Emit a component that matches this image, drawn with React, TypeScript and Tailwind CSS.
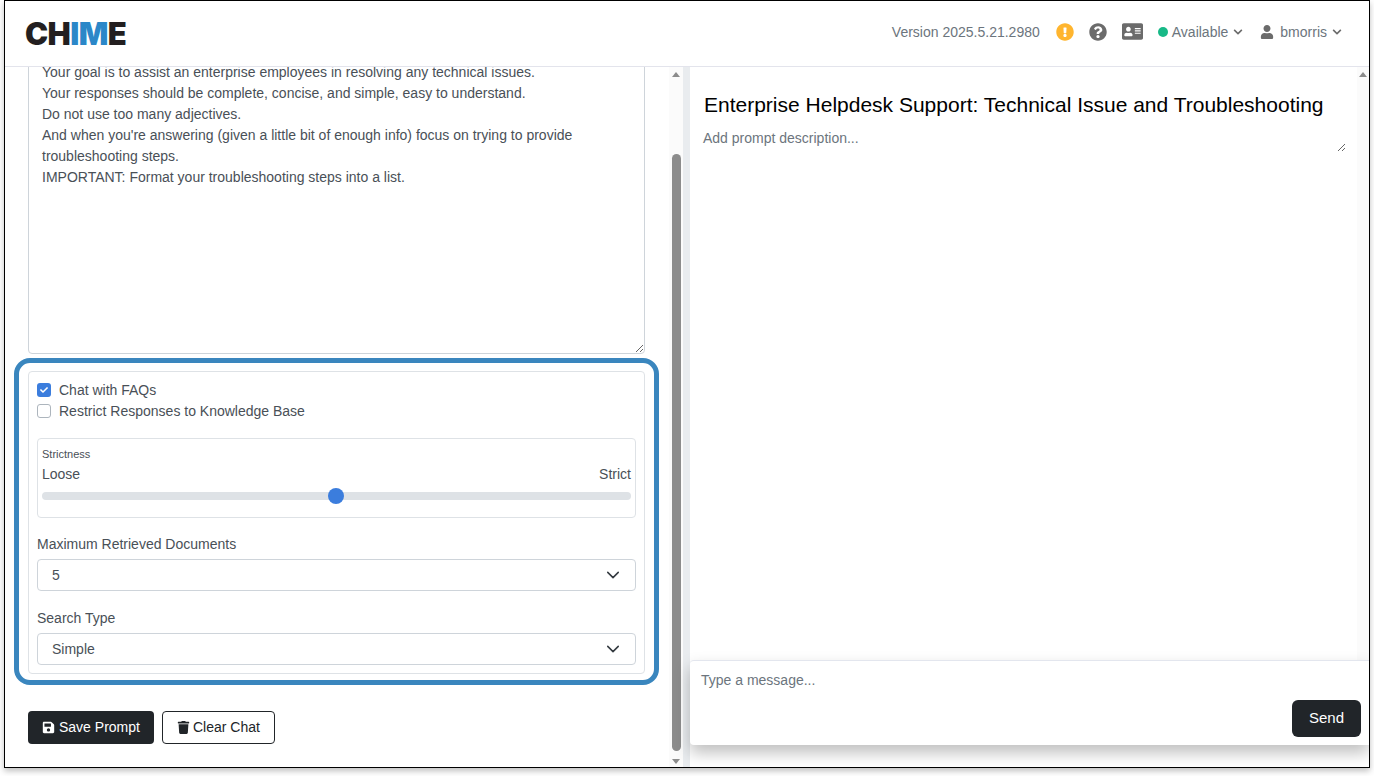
import { FaAddressCard, FaChevronDown, FaExclamationCircle, FaQuestionCircle, FaSave, FaTrash, FaUser, FaCheck } from "react-icons/fa";

const PROMPT = `Your goal is to assist an enterprise employees in resolving any technical issues.
Your responses should be complete, concise, and simple, easy to understand.
Do not use too many adjectives.
And when you're answering (given a little bit of enough info) focus on trying to provide troubleshooting steps.
IMPORTANT: Format your troubleshooting steps into a list.`;

function Header() {
  return (
    <header className="flex h-[66px] shrink-0 items-center justify-between border-b border-[#e3e4ec] bg-white pb-[4px] pl-[20px] pr-[27px]">
      <div className="mt-[4px] flex font-['Inter',sans-serif] text-[31px] leading-none font-black tracking-[-0.6px] text-[#231f20]">
        <span>CH</span>
        <span className="text-[#2b87c8]">IM</span>
        <span>E</span>
      </div>
      <div className="flex items-center text-sm text-[#6c757d]">
        <span>Version 2025.5.21.2980</span>
        <FaExclamationCircle className="ml-4 text-[18px] text-[#ffb52e]" />
        <FaQuestionCircle className="ml-[15px] text-[18px] text-[#6b6b6b]" />
        <FaAddressCard className="ml-[15px] text-[21px] text-[#6b6b6b]" />
        <span className="ml-[15px] size-[10px] rounded-full bg-[#17b987]" />
        <span className="ml-[4px]">Available</span>
        <FaChevronDown className="ml-[5px] text-[10px] text-[#6b6b6b]" />
        <FaUser className="ml-[17px] text-[14px] text-[#6b6b6b]" />
        <span className="ml-[6px]">bmorris</span>
        <FaChevronDown className="ml-[5px] text-[10px] text-[#6b6b6b]" />
      </div>
    </header>
  );
}

function Scrollbar() {
  return (
    <div className="flex w-[14px] shrink-0 flex-col items-center bg-[#fbfbfb]">
      <span className="mt-[5px] h-0 w-0 border-x-[4px] border-b-[5px] border-x-transparent border-b-[#8c8c8c]" />
      <div className="mb-[8px] mt-[77px] w-[9px] flex-1 rounded-full bg-[#8c8c8c]" />
      <span className="mb-[3px] h-0 w-0 border-x-[4px] border-t-[5px] border-x-transparent border-t-[#8c8c8c]" />
    </div>
  );
}

function SelectField({ label, value }: { label: string; value: string }) {
  return (
    <div>
      <div className="mb-[4px] text-sm leading-[21px]">{label}</div>
      <div className="flex h-[32px] items-center justify-between rounded-[4px] border border-[#ced4da] pl-[14px] pr-[15px]">
        <span>{value}</span>
        <svg width="14" height="14" viewBox="0 0 16 16" fill="none" stroke="#343a40" strokeWidth="1.75" strokeLinecap="round" strokeLinejoin="round">
          <path d="m2 5 6 6 6-6" />
        </svg>
      </div>
    </div>
  );
}

function Settings() {
  return (
    <div className="ml-[9px] mr-[10px] mt-[4px] rounded-[16px] border-[5px] border-[#3a86be] px-[9px] pb-[6px] pt-[8px]">
      <div className="flex flex-col rounded-[4px] border border-[#dee2e6] px-2 pb-[8px] pt-[7px] text-sm text-[#495057]">
        <label className="flex h-[21px] items-center">
          <span className="flex size-[14px] items-center justify-center rounded-[3px] bg-[#3b7ddd]">
            <FaCheck className="text-[8px] text-white" />
          </span>
          <span className="ml-2">Chat with FAQs</span>
        </label>
        <label className="flex h-[21px] items-center">
          <span className="size-[14px] rounded-[3px] border border-[#adb5bd] bg-white" />
          <span className="ml-2">Restrict Responses to Knowledge Base</span>
        </label>
        <div className="mt-[17px] h-[80px] rounded-[4px] border border-[#dee2e6] px-1 pt-[8px]">
          <div className="text-[11px] leading-[14px]">Strictness</div>
          <div className="mt-[3px] flex justify-between leading-[21px]">
            <span>Loose</span>
            <span>Strict</span>
          </div>
          <div className="mt-[7px] flex h-2 items-center justify-center rounded-full bg-[#dee2e6]">
            <span className="mr-[2px] size-4 rounded-full bg-[#3b7ddd]" />
          </div>
        </div>
        <div className="mt-4 flex flex-col gap-[17px]">
          <SelectField label="Maximum Retrieved Documents" value="5" />
          <SelectField label="Search Type" value="Simple" />
        </div>
      </div>
    </div>
  );
}

function LeftPane() {
  return (
    <div className="flex min-w-0 flex-1 bg-white">
      <div className="flex min-w-0 flex-1 flex-col overflow-hidden">
        <div className="-mt-[12px] ml-[23px] mr-[24px] shrink-0">
          <textarea
            readOnly
            value={PROMPT}
            className="block h-[299px] w-full rounded-[4px] border border-[#ced4da] px-[13px] py-[6px] text-sm leading-[21px] text-[#495057] outline-none"
          />
        </div>
        <Settings />
        <div className="ml-[23px] mt-[26px] flex gap-2 text-sm">
          <button className="flex h-[33px] items-center gap-[4px] rounded-[4px] bg-[#212529] px-[14px] pb-px text-white">
            <FaSave className="text-[13px]" />
            Save Prompt
          </button>
          <button className="flex h-[33px] items-center gap-[3px] rounded-[4px] border border-[#212529] bg-white px-[14px] pb-px text-[#212529]">
            <FaTrash className="text-[13px]" />
            Clear Chat
          </button>
        </div>
      </div>
      <Scrollbar />
    </div>
  );
}

function RightPane() {
  return (
    <div className="flex w-[686px] shrink-0 flex-col border-l-[7px] border-[#e9ecef] bg-white">
      <div className="flex min-h-0 flex-1">
        <div className="min-w-0 flex-1 pl-[7px] pr-[11px] pt-[24px]">
          <div className="px-[7px] text-[21px] leading-[28px] text-black">
            Enterprise Helpdesk Support: Technical Issue and Troubleshooting
          </div>
          <textarea
            readOnly
            placeholder="Add prompt description..."
            className="mt-[9px] block h-[24px] w-full px-[6px] text-sm leading-[21px] text-[#495057] outline-none placeholder:text-[#6c757d]"
          />
        </div>
        <div className="flex w-[12px] shrink-0 justify-center bg-[#fbfbfb]">
          <span className="mt-[5px] h-0 w-0 border-x-[4px] border-b-[5px] border-x-transparent border-b-[#8c8c8c]" />
        </div>
      </div>
      <div className="mb-[22px] h-[85px] shrink-0 rounded-l-[4px] border-t border-[#e3e6ee] bg-white pl-[11px] pr-[8px] pt-[10px] shadow-[0_8px_16px_rgba(0,0,0,0.25)]">
        <div className="text-sm leading-[18px] text-[#6c757d]">Type a message...</div>
        <div className="mt-[11px] flex justify-end">
          <button className="h-[37px] w-[69px] rounded-[6px] bg-[#212529] text-[15px] text-white">Send</button>
        </div>
      </div>
    </div>
  );
}

export default function App() {
  return (
    <div className="h-[776px] w-[1374px] bg-white pl-1 font-['Liberation_Sans',Arial,sans-serif]">
      <div className="flex h-[768px] w-[1366px] flex-col overflow-hidden border border-black shadow-[0_3px_6px_rgba(0,0,0,0.25)]">
        <Header />
        <div className="flex min-h-0 flex-1">
          <LeftPane />
          <RightPane />
        </div>
      </div>
    </div>
  );
}
